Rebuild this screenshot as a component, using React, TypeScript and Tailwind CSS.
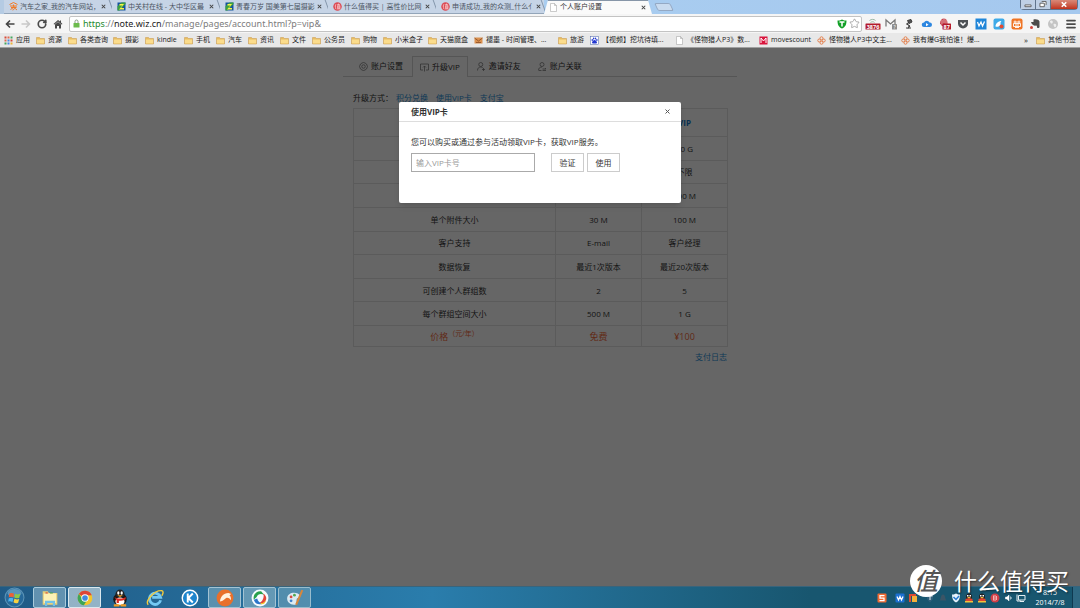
import type { ReactNode } from "react";
import { Menu, RotateCw, Star } from "lucide-react";

const tabs = [
  { title: "汽车之家_我的汽车网站，", icon: "home", active: false },
  { title: "中关村在线 - 大中华区最", icon: "zol", active: false },
  { title: "青春万岁 国美第七届摄影", icon: "zol", active: false },
  { title: "什么值得买 | 高性价比网", icon: "smzdm", active: false },
  { title: "申请成功_我的众测_什么亻", icon: "smzdm", active: false },
  { title: "个人账户设置", icon: "page", active: true },
];

const bookmarks = [
  { name: "应用", icon: "apps", width: "w-8" },
  { name: "资源", icon: "folder", width: "w-8" },
  { name: "各类查询", icon: "folder", width: "w-[45px]" },
  { name: "摄影", icon: "folder", width: "w-8" },
  { name: "kindle", icon: "folder", width: "w-[39px]" },
  { name: "手机", icon: "folder", width: "w-8" },
  { name: "汽车", icon: "folder", width: "w-8" },
  { name: "资讯", icon: "folder", width: "w-8" },
  { name: "文件", icon: "folder", width: "w-8" },
  { name: "公务员", icon: "folder", width: "w-[39px]" },
  { name: "购物", icon: "folder", width: "w-8" },
  { name: "小米盒子", icon: "folder", width: "w-[45px]" },
  { name: "天猫魔盒", icon: "folder", width: "w-[46px]" },
  { name: "褪墨 - 时间管理、...", icon: "mail", width: "w-[84px]" },
  { name: "旅游", icon: "folder", width: "w-8" },
  { name: "【视频】挖坑待填...", icon: "baidu", width: "w-[85px]" },
  { name: "《怪物猎人P3》数...", icon: "page", width: "w-[84px]" },
  { name: "movescount", icon: "moves", width: "w-[58px]" },
  { name: "怪物猎人P3中文主...", icon: "knot", width: "w-[84px]" },
  { name: "我有爆G我怕谁！爆...", icon: "knot", width: "w-[84px]" },
];

const rows = [
  ["", "", "10 G"],
  ["", "", "不限"],
  ["", "", "500 M"],
  ["单个附件大小", "30 M", "100 M"],
  ["客户支持", "E-mail", "客户经理"],
  ["数据恢复", "最近1次版本", "最近20次版本"],
  ["可创建个人群组数", "2", "5"],
  ["每个群组空间大小", "500 M", "1 G"],
];

const SiteIcon = ({ name }: { name: string }) => {
  const shapes: Record<string, ReactNode> = {
    home: (
      <g stroke="#f07a28" strokeWidth="2" fill="none">
        <path d="M1 5 9 1l8 4M2 8h14M9 5v3M4 11h11M9 8c3 3 2 8-2 8M9 11l-6 4M10 11l6 5" />
      </g>
    ),
    zol: (
      <>
        <rect x="1" y="1" width="16" height="16" fill="#17549e" />
        <path d="M1 9 9 1h8v3L5 17H1z" fill="#3ba03f" />
        <path d="M5 4h9L8 12h6v3H4l7-8H5z" fill="#fbf54a" />
      </>
    ),
    smzdm: (
      <>
        <circle cx="9" cy="9" r="8.5" fill="#dc4b55" />
        <path d="M6 4 4 9M5 7v7M8 5h6M11 3v3M9 7h5v6H9zM9 9h5M9 11h5M7 14h8" stroke="#ffe4e4" fill="none" />
      </>
    ),
    page: <path d="M3 1h8l4 4v12H3zM11 1v4h4" fill="#fff" stroke="#999" />,
    folder: (
      <>
        <path d="M1 3h6l2 2h8v11H1z" fill="#e8bd62" stroke="#c8964a" />
        <path d="M2 7h14v8H2z" fill="#fbdc8c" />
      </>
    ),
    mail: (
      <>
        <path d="M1 3h16v12H1z" fill="#db914f" />
        <path d="M1 4l8 6 8-6M4 13h10" stroke="#874a20" fill="none" strokeWidth="1.5" />
      </>
    ),
    baidu: (
      <>
        <rect x="1" y="1" width="16" height="16" fill="#fff" stroke="#4863a8" />
        <g fill="#2438d0">
          <ellipse cx="4.5" cy="8" rx="1.5" ry="2" />
          <ellipse cx="7.2" cy="5" rx="1.5" ry="2" />
          <ellipse cx="11" cy="5" rx="1.5" ry="2" />
          <ellipse cx="13.7" cy="8" rx="1.5" ry="2" />
          <path d="M9 8c2 0 5 3 5 5s-2 2-5 2-5 0-5-2 3-5 5-5" />
        </g>
      </>
    ),
    moves: (
      <>
        <path d="M1 1h16v16H1z" fill="#d9143c" />
        <path d="M4 14V4l5 6 5-6v10" fill="none" stroke="#fff" strokeWidth="2" />
      </>
    ),
    knot: (
      <g fill="none" stroke="#e37b45" strokeWidth="1.8">
        <circle cx="9" cy="4.5" r="3" />
        <circle cx="4.5" cy="9" r="3" />
        <circle cx="13.5" cy="9" r="3" />
        <circle cx="9" cy="13.5" r="3" />
      </g>
    ),
    apps: (
      <>
        <path d="M1 1h4v4H1zM13 7h4v4h-4z" fill="#d64a3a" />
        <path d="M7 1h4v4H7zM1 7h4v4H1z" fill="#e06a50" />
        <path d="M13 1h4v4h-4zM1 13h4v4H1z" fill="#45a55c" />
        <path d="M7 7h4v4H7zM7 13h4v4H7z" fill="#4a86e0" />
        <path d="M13 13h4v4h-4z" fill="#eeb63b" />
      </>
    ),
  };
  return (
    <svg viewBox="0 0 18 18" className="size-[9px] shrink-0">
      {shapes[name]}
    </svg>
  );
};

const TabStrip = () => (
  <div className="flex h-[14px] justify-between bg-linear-to-r from-[#b5cbe3] via-[#a9cdf0] to-[#a5c8ee]">
    <div className="flex pl-1">
      {tabs.map((tab, i) => (
        <div
          key={i}
          className={
            tab.active
              ? "relative z-10 flex h-[14px] w-[108px] items-center px-[5px] text-[#333] before:absolute before:inset-0 before:-z-10 before:border-t before:border-[#8796a8] before:bg-[#fafafa] before:[clip-path:polygon(4px_0,104px_0,108px_100%,0_100%)]"
              : "relative flex h-[14px] w-[108px] items-center border-b border-[#93a5b9] bg-[#c6d4e6] px-[5px] text-[#4c5563] after:absolute after:inset-y-0 after:right-0 after:w-px after:skew-x-[20deg] after:bg-[#8496ab]"
          }
        >
          <SiteIcon name={tab.icon} />
          <span className="ml-[2px] flex-1 text-[7px] leading-[10px] whitespace-nowrap">{tab.title}</span>
          <button aria-label="关闭标签" className="w-[7px] shrink-0">
            <svg viewBox="0 0 8 8" className="size-[7px]">
              <path d="m2 2 4 4M6 2 2 6" stroke="#444" strokeWidth="1.2" />
            </svg>
          </button>
        </div>
      ))}
      <button aria-label="新标签" className="mt-[3px] ml-1 h-2 w-4 skew-x-[25deg] rounded-xs border border-[#94a9c4] bg-[#c9dbef]" />
    </div>
    <div className="mr-[2px] flex h-[10px] w-[58px] rounded-b-sm border border-t-0 border-[#60748c]">
      <button aria-label="最小化" className="flex-1 bg-[#bfd0e5]">
        <svg viewBox="0 0 16 10" className="h-[9px] w-full">
          <path d="M4.500 5.500h7v2h-7z" fill="#fff" stroke="#555" />
        </svg>
      </button>
      <button aria-label="还原" className="flex-1 border-x border-[#60748c] bg-[#bfd0e5]">
        <svg viewBox="0 0 16 10" className="h-[9px] w-full">
          <path d="M6.500 1.500h5v4M4.500 3.500h5v4h-5z" fill="#fff" stroke="#555" />
        </svg>
      </button>
      <button aria-label="关闭" className="w-[26px] bg-linear-to-b from-[#d98978] to-[#c0321d]">
        <svg viewBox="0 0 24 10" className="h-[9px] w-full">
          <path d="m9.500 2.500 5 5M14.500 2.500l-5 5" stroke="#fff" strokeWidth="1.8" />
        </svg>
      </button>
    </div>
  </div>
);

const extensionIcons: { label: string; icon: ReactNode }[] = [
  {
    label: "rss",
    icon: (
      <>
        <path d="M5 5c4-3 9-3 12 0M7 9c3-2 6-2 8 0" stroke="#9bb8a6" fill="none" strokeWidth="2" />
        <rect x="-3" y="11" width="30" height="12" rx="1" fill="#b21a2c" />
        <text x="12" y="21" fontSize="11" fontWeight="700" fill="#fff" textAnchor="middle">3876</text>
      </>
    ),
  },
  {
    label: "gmail",
    icon: (
      <>
        <path d="M2 17V4l9 8 9-8v13" stroke="#777" strokeWidth="2.500" fill="#f6f6f6" />
        <rect x="14" y="12" width="10" height="11" rx="1" fill="#8d8d8d" />
        <text x="19" y="21" fontSize="10" fill="#fff" textAnchor="middle">?</text>
      </>
    ),
  },
  {
    label: "lamp",
    icon: (
      <>
        <path d="M9 5 16 3l2 5-6 3zM11 9l-4 3 7 4-4 5" stroke="#3c3c3c" strokeWidth="2" fill="#555" />
        <path d="M6 20h10" stroke="#3c3c3c" strokeWidth="2" />
      </>
    ),
  },
  {
    label: "cloud",
    icon: (
      <>
        <path d="M6 18a4.500 4.500 0 0 1 0-9 6 6 0 0 1 11 0 4.500 4.500 0 0 1 1 9z" fill="#2e87e0" />
        <path d="m10 10 5 3.500-5 3z" fill="#fff" />
      </>
    ),
  },
  {
    label: "adblock",
    icon: (
      <>
        <path d="M2 11C2-2 17-2 17 10v6H6z" fill="#c6414c" />
        <path d="M6 4v9M10 1v10M14 3v9" stroke="#fff" />
        <rect x="7" y="11" width="17" height="12" rx="1" fill="#b21a2c" />
        <text x="15.500" y="21" fontSize="11" fontWeight="700" fill="#fff" textAnchor="middle">87</text>
      </>
    ),
  },
  {
    label: "pocket",
    icon: (
      <>
        <path d="M2 4h20v7a10 10 0 0 1-20 0z" fill="#4d5155" />
        <path d="m7 9 5 5 5-5" stroke="#fff" strokeWidth="3" fill="none" />
      </>
    ),
  },
  {
    label: "wiz",
    icon: (
      <>
        <path d="M1 1h22v22H1z" fill="#2186d8" />
        <path d="m5 8 3 8 4-8 3 8 4-9" stroke="#fff" strokeWidth="2.500" fill="none" />
      </>
    ),
  },
  {
    label: "bird",
    icon: (
      <>
        <rect x="1" y="1" width="22" height="22" rx="4" fill="#3eaae8" />
        <path d="M5 17c0-6 5-11 12-11-4 3 0 6-3 9s-6 3-9 2" fill="#fff" />
        <circle cx="17" cy="17" r="4" fill="#e34c33" />
      </>
    ),
  },
  {
    label: "mi",
    icon: (
      <>
        <rect x="1" y="1" width="22" height="22" rx="4" fill="#ef7525" />
        <path d="M5 8h14M8 5v5M16 5v5M5 11h14v6H5zM10 11v6M14 11v6M8 19h8" stroke="#fff" strokeWidth="1.800" fill="none" />
      </>
    ),
  },
  {
    label: "evernote",
    icon: (
      <>
        <path d="M4 8h5V3c5-1 11 0 12 4v11c-1 4-6 2-5-1l-1-2c-4 1-9 0-11-7" fill="#4c4c4c" />
        <circle cx="5" cy="19" r="3" fill="#d34239" />
      </>
    ),
  },
  {
    label: "globe",
    icon: (
      <>
        <circle cx="12" cy="12" r="10" fill="#c4c4c4" />
        <path d="M6 6c4-3 7 1 5 4s-5 0-5-4M13 12c4-2 7 1 5 5s-5 0-5-5" fill="#eee" />
      </>
    ),
  },
];

const Toolbar = () => (
  <div className="flex h-[19px] items-center bg-[#f5f5f5] text-[#4a4a4a]">
    <button aria-label="后退" className="ml-[5px] size-[10px]">
      <svg viewBox="0 0 20 20" className="size-[10px]">
        <path d="M19 10H3M10 3l-7 7 7 7" fill="none" stroke="#444" strokeWidth="3.200" />
      </svg>
    </button>
    <button aria-label="前进" className="ml-[6px] size-[10px]">
      <svg viewBox="0 0 20 20" className="size-[10px]">
        <path d="M1 10h16M10 3l7 7-7 7" fill="none" stroke="#c7c7c7" strokeWidth="3.200" />
      </svg>
    </button>
    <button aria-label="刷新" className="ml-[6px] size-[10px]">
      <RotateCw className="size-[10px]" strokeWidth={4} />
    </button>
    <button aria-label="主页" className="ml-[6px] size-[10px]">
      <svg viewBox="0 0 20 20" className="size-[10px]">
        <path d="M10 2 1 10l2 1 7-6 7 6 2-1-3-3V3h-2v2zM4 11v8h4v-5h4v5h4v-8l-6-5z" fill="#484848" />
      </svg>
    </button>
    <div className="ml-[6px] flex h-[16px] flex-1 items-center rounded-xs border border-[#c3c3c3] bg-white">
      <svg viewBox="0 0 14 18" className="ml-[3px] h-[9px] w-[7px]">
        <path d="M4 8V5a3 3 0 0 1 6 0v3" fill="none" stroke="#8a9a86" strokeWidth="2" />
        <rect x="1" y="8" width="12" height="9" rx="1" fill="#6dbb4d" />
      </svg>
      <div className="ml-[3px] flex-1 font-['Noto_Sans',sans-serif] text-[9px] leading-[14px] whitespace-nowrap text-[#7c7c7c]">
        <span className="text-[#1f8a2e]">https</span>://<span className="text-[#222]">note.wiz.cn</span>
        /manage/pages/account.html?p=vip&amp;
      </div>
      <svg viewBox="0 0 20 20" className="size-[10px]">
        <path d="M10 1c3 2 6 2 9 2 0 8-2 13-9 16C3 16 1 11 1 3c3 0 6 0 9-2" fill="#12a027" />
        <path d="M5 6h10M10 6v9" stroke="#fff" strokeWidth="3" />
      </svg>
      <Star className="mr-px ml-[2px] size-[11px] text-[#8a8a8a]" strokeWidth={1.5} />
    </div>
    <div className="ml-[5px] flex gap-[6px]">
      {extensionIcons.map(({ label, icon }) => (
        <button key={label} aria-label={label} className="w-3">
          <svg viewBox="0 0 24 24" className="size-3 overflow-visible">{icon}</svg>
        </button>
      ))}
    </div>
    <button aria-label="菜单" className="mr-[3px] ml-[6px]">
      <Menu className="size-[12px]" strokeWidth={3.5} />
    </button>
  </div>
);

const BookmarkBar = () => (
  <div className="flex h-[15px] items-center border-b border-[#a0a0a0] bg-[#e8e8e8] px-1 text-[7px] leading-[12px] text-[#222]">
    {bookmarks.map((item) => (
      <a key={item.name} href="#" className={`flex shrink-0 items-center gap-[3px] whitespace-nowrap ${item.width}`}>
        <SiteIcon name={item.icon} />
        {item.name}
      </a>
    ))}
    <button className="mr-2 ml-auto text-[8px]">»</button>
    <a href="#" className="flex items-center gap-[3px] whitespace-nowrap">
      <SiteIcon name="folder" />
      其他书签
    </a>
  </div>
);

const navItems = [
  {
    name: "账户设置",
    icon: (
      <>
        <path d="m9 1 3 1 3 2 2 5-2 5-3 2-3 1-3-1-3-2-2-5 2-5 3-2z" />
        <circle cx="9" cy="9" r="3.500" />
      </>
    ),
  },
  { name: "升级VIP", icon: <path d="M6 14H1V2h16v12h-5M9 17V6M6 9l3-3 3 3" /> },
  {
    name: "邀请好友",
    icon: (
      <>
        <circle cx="7.500" cy="5" r="4" />
        <path d="M1 17c0-5 3-7 6.500-7 2 0 3 .5 4 1.500M13 12v6M10 15h6" />
      </>
    ),
  },
  {
    name: "账户关联",
    icon: (
      <>
        <circle cx="8" cy="5" r="4" />
        <path d="M1 17c0-5 3-7 7-7M2 17h5M9 14h7l-2-2M16 17H9" />
      </>
    ),
  },
];

const AccountPage = () => (
  <div className="mx-auto w-[394px] pt-[8px] text-[8px] leading-[12px] text-[#333]">
    <nav className="flex h-[21px] gap-px border-b border-[#d4d4d4] pl-2">
      {navItems.map((item, i) => (
        <a
          key={item.name}
          href="#"
          className={
            i === 1
              ? "-mb-px flex items-center gap-[3px] border border-b-0 border-[#d4d4d4] bg-white px-[7px]"
              : "flex items-center gap-[3px] px-2"
          }
        >
          <svg viewBox="0 0 18 18" className="size-[9px]" fill="none" stroke="#777" strokeWidth="1.500">
            {item.icon}
          </svg>
          {item.name}
        </a>
      ))}
    </nav>

    <div className="px-[10px]">
      <div className="mt-[15px] flex gap-2">
        <span className="-mr-[5px]">升级方式：</span>
        <a href="#" className="text-[#2a8fd8]">积分兑换</a>
        <a href="#" className="text-[#2a8fd8]">使用VIP卡</a>
        <a href="#" className="text-[#2a8fd8]">支付宝</a>
      </div>

      <table className="mt-[4px] h-[239px] w-full table-fixed border-collapse text-center [&_td]:border [&_td]:border-[#e4e4e4] [&_td]:p-0 [&_td]:pt-px [&_th]:border [&_th]:border-[#e4e4e4] [&_th]:p-0">
        <colgroup>
          <col className="w-[202px]" />
          <col className="w-[86px]" />
          <col className="w-[86px]" />
        </colgroup>
        <thead>
          <tr className="h-[28px]">
            <th></th>
            <th></th>
            <th className="font-bold text-[#1479c9]">VIP</th>
          </tr>
        </thead>
        <tbody>
          {rows.map((row, i) => (
            <tr key={i}>
              {row.map((cell, j) => (
                <td key={j}>{cell}</td>
              ))}
            </tr>
          ))}
          <tr className="h-[21px] text-[9px] text-[#f26a3a]">
            <td>
              价格<sup className="text-[7px]">（元/年）</sup>
            </td>
            <td>免费</td>
            <td>¥100</td>
          </tr>
        </tbody>
      </table>

      <div className="mt-[4px] text-right">
        <a href="#" className="text-[#2a8fd8]">支付日志</a>
      </div>
    </div>
  </div>
);

const VipDialog = () => (
  <div className="absolute inset-0 flex items-start justify-center bg-black/60 pt-[54px]">
    <div role="dialog" aria-labelledby="vip-title" className="w-[282px] rounded-xs bg-white pb-[31px] text-[8px] leading-[12px] text-[#333] shadow-md">
      <div className="flex h-[20px] items-center justify-between border-b border-[#ddd] pr-[10px] pl-3">
        <h2 id="vip-title" className="font-bold">使用VIP卡</h2>
        <button aria-label="关闭" className="size-[7px]">
          <svg viewBox="0 0 14 14" className="size-[7px]">
            <path d="m3 3 8 8M11 3l-8 8" stroke="#555" strokeWidth="2" />
          </svg>
        </button>
      </div>
      <div className="px-3 pt-[14px]">
        <label htmlFor="vip-card" className="block">您可以购买或通过参与活动领取VIP卡，获取VIP服务。</label>
        <div className="mt-[5px] flex">
          <input
            id="vip-card"
            placeholder="输入VIP卡号"
            className="mr-4 h-[19px] w-[124px] border border-[#aaa] px-1 placeholder:text-[#999]"
          />
          <button className="mr-[3px] h-[19px] w-[33px] border border-[#ccc]">验证</button>
          <button className="h-[19px] w-[33px] border border-[#ccc]">使用</button>
        </div>
      </div>
    </div>
  </div>
);

const taskbarApps = [
  {
    label: "资源管理器",
    open: "bg-[#8db4c9]/60 border-[#a9cada]",
    icon: (
      <>
        <path d="M3 4h9l2 3h15v21H3z" fill="#e9cf77" />
        <path d="M5 8h22v17H5z" fill="#fdf1b6" />
        <path d="M8 6h4v2H8z" fill="#d2483c" />
        <path d="M16 6h5v2h-5z" fill="#4ba35a" />
        <path d="M7 30v-9h18v9h-4v-5H11v5z" fill="#72c1e8" />
      </>
    ),
  },
  {
    label: "Chrome",
    open: "bg-[#c3d5de]/70 border-[#dbe8ee]",
    icon: (
      <>
        <circle cx="16" cy="16" r="13" fill="#f2c52c" />
        <path d="M16 16 5 9a13 13 0 0 1 23 2H16z" fill="#dd4437" />
        <path d="M5 9a13 13 0 0 0 9 20l6-10-8-1z" fill="#3ea556" />
        <circle cx="16" cy="16" r="6.500" fill="#fff" />
        <circle cx="16" cy="16" r="5" fill="#4188df" />
      </>
    ),
  },
  {
    label: "QQ",
    open: "border-transparent",
    icon: (
      <>
        <ellipse cx="16" cy="18" rx="12" ry="11" fill="#181818" />
        <ellipse cx="16" cy="9" rx="8" ry="8" fill="#222" />
        <ellipse cx="16" cy="22" rx="8" ry="7" fill="#fff" />
        <ellipse cx="13" cy="7" rx="2" ry="3" fill="#fff" />
        <ellipse cx="19" cy="7" rx="2" ry="3" fill="#fff" />
        <path d="M11 11h10l-5 3z" fill="#f2a321" />
        <path d="M6 14c5 4 15 4 20 0v4c-3 2-8 3-12 3v4h-4v-5z" fill="#dc2d23" />
        <path d="M5 29h10M17 29h10" stroke="#ef9b22" strokeWidth="4" />
      </>
    ),
  },
  {
    label: "Internet Explorer",
    open: "border-transparent",
    icon: (
      <>
        <path d="M26 20a10 10 0 1 1 0-5H11" fill="none" stroke="#74c9f3" strokeWidth="5" />
        <path d="M4 28C-2 22 14 2 28 3c4 1 2 6 0 9" fill="none" stroke="#f3cb3c" strokeWidth="2.500" />
      </>
    ),
  },
  {
    label: "酷狗",
    open: "border-transparent",
    icon: (
      <>
        <circle cx="16" cy="16" r="15" fill="#fff" />
        <circle cx="16" cy="16" r="12.500" fill="#1d85cd" />
        <path d="M12 8v16M21 8l-8 8 8 8" fill="none" stroke="#fff" strokeWidth="3.500" />
      </>
    ),
  },
  {
    label: "飞狐",
    open: "bg-[#7fa9bd]/60 border-[#a3c3d3]",
    icon: (
      <>
        <circle cx="16" cy="16" r="15" fill="#e8702b" />
        <path d="M7 22c1-8 6-15 15-15l5 2-3 2c3 3 3 7 2 9-2-4-5-5-8-4-3 2-5 6-11 6" fill="#fff1df" />
      </>
    ),
  },
  {
    label: "影音",
    open: "bg-[#8db4c5]/60 border-[#a3c3d3]",
    icon: (
      <>
        <circle cx="16" cy="16" r="15" fill="#f5fbff" />
        <path d="M5 19C3 11 9 3 18 4l6 7c-6-4-12-2-14 3z" fill="#27a14d" />
        <path d="M22 8c8 6 6 14-1 18l-7-1c6-2 10-9 8-17" fill="#e4453a" />
        <path d="M5 19c3 9 10 9 16 7-5-1-9-4-10-9z" fill="#2b75ca" />
        <path d="M17 25c5 0 9-3 10-7-1 7-5 10-10 9z" fill="#f6c42d" />
      </>
    ),
  },
  {
    label: "画图",
    open: "bg-[#6fa0b8]/60 border-[#98bccd]",
    icon: (
      <>
        <path d="M2 17C2 4 22 4 25 12c1 5-5 3-6 6s3 10-5 10C7 28 2 23 2 17" fill="#dcebf3" />
        <circle cx="9" cy="14" r="2.500" fill="#d84c40" />
        <circle cx="15" cy="11" r="2.500" fill="#51a852" />
        <circle cx="9" cy="21" r="2.500" fill="#3d7fcc" />
        <path d="M29 2 18 28" stroke="#d8873b" strokeWidth="3.500" />
      </>
    ),
  },
];

const penguin = (
  <>
    <ellipse cx="10" cy="8" rx="6" ry="7" fill="#222" />
    <path d="M3 12c3-2 11-2 14 0v6H3z" fill="#e2442f" />
    <path d="M6 8h8l-4 3zM2 16h16v3H2z" fill="#f5c23b" />
    <path d="M6 4h3v3H6zM11 4h3v3h-3z" fill="#fff" />
  </>
);

const trayIcons: { label: string; icon: ReactNode }[] = [
  {
    label: "杀毒",
    icon: (
      <>
        <path d="M4 2h12v10l-6 7-6-7z" fill="#2f5f7a" />
        <path d="M5 6h10M10 3v11" stroke="#e5eef2" strokeWidth="2" />
      </>
    ),
  },
  { label: "通知", icon: <path d="M3 15c3-2 2-12 7-12s4 10 7 12z" fill="#3b5566" /> },
  {
    label: "管家",
    icon: (
      <>
        <path d="M10 1c3 2 6 2 8 2 0 8-2 13-8 16C4 16 2 11 2 3c2 0 5 0 8-2" fill="#e7f2fb" />
        <path d="m5 8 5 5 6-7" fill="none" stroke="#277bd0" strokeWidth="3" />
      </>
    ),
  },
  { label: "QQ 1", icon: penguin },
  { label: "QQ 2", icon: penguin },
  {
    label: "录音",
    icon: (
      <>
        <circle cx="10" cy="10" r="9" fill="#d13f47" />
        <path d="M7 5v10M10 4v12M13 6v8" stroke="#ffd8d8" strokeWidth="1.500" />
      </>
    ),
  },
  { label: "音量", icon: <path d="M5 8h3l4-4v12l-4-4H5zM15 7c2 2 2 4 0 6" fill="#fff" stroke="#fff" /> },
  { label: "网络", icon: <path d="M5 5h13v9H5zM2 3v13h8M8 17h8" fill="none" stroke="#e7eef2" strokeWidth="2" /> },
];

const Taskbar = () => (
  <div className="flex h-[22px] shrink-0 items-center border-t border-[#38647c] bg-linear-to-r from-[#205a85] from-0% via-[#2a7dac] via-40% to-[#18566f] to-75%">
    <button aria-label="开始" className="ml-1 w-[29px]">
      <svg viewBox="0 0 40 40" className="size-[21px]">
        <circle cx="20" cy="20" r="18" fill="#26699a" stroke="#5b93b6" strokeWidth="2" />
        <ellipse cx="20" cy="12" rx="13" ry="8" fill="#7db3d0" opacity=".6" />
        <path d="M10 13c3-2 6-2 9 0l-1 7c-3-2-6-2-9 0z" fill="#ed6034" />
        <path d="M21 13c3 2 6 2 10 0l-2 8c-3 1-6 1-9-1z" fill="#8dca44" />
        <path d="M9 22c3-2 6-2 9 0l-2 7c-3-2-5-2-8-1z" fill="#4fb4ee" />
        <path d="M20 22c3 2 6 2 9 1l-2 7c-4 2-6 1-9-1z" fill="#f9d140" />
      </svg>
    </button>
    <div className="flex gap-[2px]">
      {taskbarApps.map((app) => (
        <button key={app.label} aria-label={app.label} className={`flex h-[21px] w-[33px] items-center justify-center rounded-xs border ${app.open}`}>
          <svg viewBox="0 0 32 32" className="size-[18px]">{app.icon}</svg>
        </button>
      ))}
    </div>
    <div className="ml-auto flex items-center gap-[3px]">
      <svg viewBox="0 0 20 20" className="mr-[5px] size-[10px]">
        <rect x="1" y="1" width="18" height="18" rx="2" fill="#f06a32" />
        <path d="M15 5H6v5h8v5H5" fill="none" stroke="#fff" strokeWidth="2.500" />
      </svg>
      <svg viewBox="0 0 20 20" className="size-[10px]">
        <rect x="1" y="1" width="18" height="18" rx="2" fill="#1c70d2" />
        <path d="m4 7 3 7 3-7 3 7 3-7" fill="none" stroke="#fff" strokeWidth="2.500" />
      </svg>
      <svg viewBox="0 0 20 20" className="mr-1 size-[10px]">
        <path d="M2 2h14v4H6v12H2z" fill="#dd4933" />
        <path d="M8 6h10v12H8z" fill="#f4b13a" />
      </svg>
      {trayIcons.map(({ label, icon }) => (
        <svg key={label} viewBox="0 0 20 20" aria-label={label} className="size-[10px]">{icon}</svg>
      ))}
    </div>
    <div className="ml-2 w-[32px] text-center text-[7px] leading-[10px] text-white">
      <p>8:15</p>
      <p>2014/7/8</p>
    </div>
    <button aria-label="显示桌面" className="ml-[6px] h-full w-2 border-l border-[#0f3950] bg-[#3f7490]/60" />
  </div>
);

const Watermark = () => (
  <div className="absolute right-[11px] bottom-[11px] flex items-center gap-3 text-white">
    <div className="flex size-[32px] items-center justify-center rounded-full bg-white text-[24px] leading-none font-medium text-[#555] italic">
      值
    </div>
    <p className="text-[23px] leading-[32px] [text-shadow:1px_1px_2px_#0008]">什么值得买</p>
  </div>
);

const App = () => {
  return (
    <div className="relative flex h-screen flex-col overflow-hidden font-['Open_Sans','Noto_Sans_CJK_SC',sans-serif]">
      <header className="shrink-0">
        <TabStrip />
        <Toolbar />
        <BookmarkBar />
      </header>
      <main className="relative flex-1 bg-white">
        <AccountPage />
        <VipDialog />
      </main>
      <Taskbar />
      <Watermark />
    </div>
  );
};
export default App;
